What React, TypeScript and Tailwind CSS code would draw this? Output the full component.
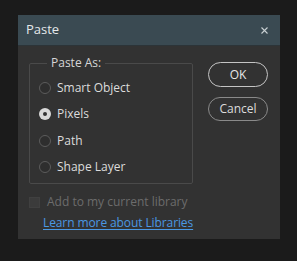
import React from 'react'

const font = { fontFamily: '"Open Sans", "Noto Sans", sans-serif' }

function Radio({ label, checked }: { label: string; checked?: boolean }) {
  return (
    <div className="flex items-center h-[16px] gap-[6px]">
      {checked ? (
        <span className="w-[12px] h-[12px] rounded-full bg-[#d9d9d9] flex items-center justify-center">
          <span className="w-[4px] h-[4px] rounded-full bg-[#333333]" />
        </span>
      ) : (
        <span className="w-[12px] h-[12px] rounded-full border border-[#5c5c5c] bg-[#2e2e2e]" />
      )}
      <span className="text-[12px] text-[#dcdcdc] leading-[16px]">{label}</span>
    </div>
  )
}

export default function App() {
  return (
    <div className="w-[297px] h-[261px] bg-[#1b1b1b] pt-[15px] pl-[18px]" style={font}>
      <div className="w-[262px] h-[224px] bg-[#323232]">
        {/* title bar */}
        <div className="h-[31px] bg-[#3a4a52] border-b border-[#2c3438] flex items-center justify-between pl-[8px] pr-[12px]">
          <span className="text-[13px] text-[#e4e8ea]">Paste</span>
          <svg width="7" height="7" viewBox="0 0 7 7">
            <path d="M0.5 0.5L6.5 6.5M6.5 0.5L0.5 6.5" stroke="#c9d0d3" strokeWidth="1.1" />
          </svg>
        </div>

        <div className="flex pl-[11px] pr-[12px] gap-[15px]">
          <fieldset className="mt-[9px] w-[164px] border border-[#4a4a4a] rounded-[2px] pb-[8px]">
            <legend className="ml-[17px] px-[4px] text-[12px] leading-[16px] text-[#d6d6d6]">Paste As:</legend>
            <div className="flex flex-col gap-[10.4px] pl-[9px] pt-[9px]">
              <Radio label="Smart Object" />
              <Radio label="Pixels" checked />
              <Radio label="Path" />
              <Radio label="Shape Layer" />
            </div>
          </fieldset>

          <div className="flex flex-col gap-[10px] pt-[16px]">
            <button className="w-[60px] h-[25px] rounded-full border-[1.5px] border-[#c4c4c4] text-[12px] text-[#e6e6e6]">
              OK
            </button>
            <button className="w-[60px] h-[24px] rounded-full border-[1.5px] border-[#8a8a8a] text-[12px] text-[#dcdcdc]">
              Cancel
            </button>
          </div>
        </div>

        <div className="flex items-center h-[16px] mt-[10px] pl-[11px] gap-[7px]">
          <span className="w-[11px] h-[11px] bg-[#3b3b3b] border border-[#404040]" />
          <span className="text-[12px] text-[#6c6c6c]">Add to my current library</span>
        </div>
        <div className="h-[16px] mt-[5px] pl-[25px] flex items-center">
          <span className="text-[12px] tracking-[-0.1px] text-[#4b98e3] underline underline-offset-2">Learn more about Libraries</span>
        </div>
      </div>
    </div>
  )
}
